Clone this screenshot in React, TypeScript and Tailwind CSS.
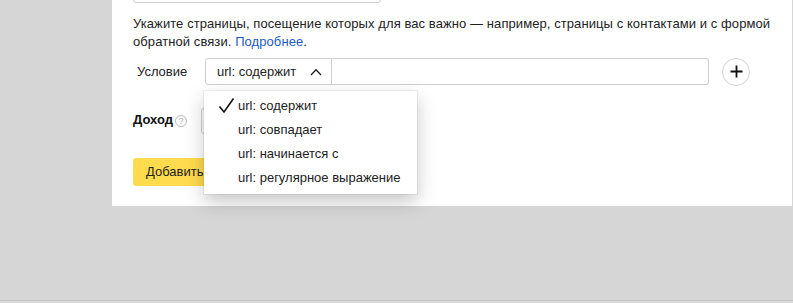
import React from "react";

const OPTIONS = ["содержит", "совпадает", "начинается с", "регулярное выражение"];

const font = { fontFamily: '"Liberation Sans", Arial, sans-serif' };

const ConditionMenu: React.FC = () => (
  <div className="absolute left-[-1px] top-[33px] z-10 w-[213px] bg-white pb-[4px] pt-[3px] shadow-[0_8px_18px_rgba(0,0,0,0.22),0_0_0_1px_rgba(0,0,0,0.06)]">
    {OPTIONS.map((o, i) => (
      <div key={o} className="relative flex h-[24px] items-center pl-[34px] text-[13px] text-[#222]">
        {i === 0 && (
          <svg className="absolute left-[14px] top-[3px]" width="17" height="17" viewBox="0 0 17 17">
            <path d="M1.5 9.5 L6 15 L15.5 1.5" fill="none" stroke="#111" strokeWidth="1.6" />
          </svg>
        )}
        url: {o}
      </div>
    ))}
  </div>
);

export default function App() {
  return (
    <div className="flex h-[303px] w-[793px] flex-col bg-[#d6d6d6]" style={font}>
      <div className="ml-[112px] h-[206px] w-[680px] overflow-visible bg-white pl-[21px]">
        <div className="-mt-[25px] h-[28px] w-[248px] rounded-[3px] border border-[#d0d0d0]" />

        <p className="mt-[12px] w-[645px] text-[13px] leading-[18px] tracking-[0.08px] text-[#222]">
          Укажите страницы, посещение которых для вас важно — например, страницы с контактами и с формой
          обратной связи. <span className="text-[#1a5cc4]">Подробнее</span>.
        </p>

        <div className="mt-[7px] flex h-[27px] items-center">
          <span className="w-[72px] pl-[4px] text-[13px] text-[#222]">Условие</span>
          <div className="relative h-[27px]">
            <button className="flex h-[27px] w-[127px] items-center rounded-l-[3px] border border-[#cfcfcf] pl-[11px] pr-[9px] text-[13px] text-[#222]">
              <span>url: содержит</span>
              <svg className="ml-auto" width="12" height="8" viewBox="0 0 12 8">
                <path d="M1 7 L6 1.8 L11 7" fill="none" stroke="#222" strokeWidth="1.3" />
              </svg>
            </button>
            <ConditionMenu />
          </div>
          <div className="h-[27px] w-[377px] rounded-r-[3px] border border-l-0 border-[#cfcfcf]" />
          <button className="ml-[13px] flex h-[28px] w-[28px] items-center justify-center rounded-full border border-[#d4d4d4]">
            <svg width="13" height="13" viewBox="0 0 13 13">
              <path d="M6.5 0.5 V12.5 M0.5 6.5 H12.5" stroke="#111" strokeWidth="1.8" />
            </svg>
          </button>
        </div>

        <div className="mt-[23px] flex h-[26px] items-center">
          <span className="-mt-[2px] text-[13px] font-bold text-[#111]">Доход</span>
          <span className="ml-[2px] flex h-[12px] w-[12px] items-center justify-center rounded-full border border-[#bbb] text-[9px] leading-none text-[#aaa]">
            ?
          </span>
          <div className="ml-[14px] h-[26px] w-[120px] rounded-[3px] border border-[#d0d0d0]" />
        </div>

        <button className="mt-[24px] h-[28px] w-[110px] rounded-[3px] bg-[#ffdb4d] pl-[13px] text-left text-[13px] text-[#222]">
          Добавить
        </button>
      </div>
      <div className="mt-auto h-[3px] border-t border-[#c6c6c6] bg-[#d9d9d9]" />
    </div>
  );
}
